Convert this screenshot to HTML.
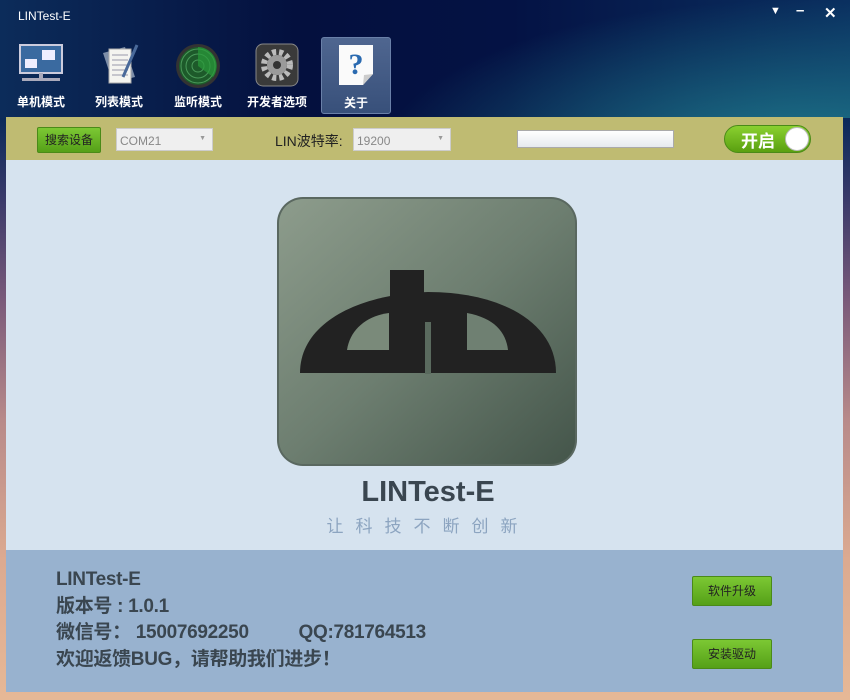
<!DOCTYPE html>
<html><head><meta charset="utf-8"><style>
*{margin:0;padding:0;box-sizing:border-box}
body{width:850px;height:700px;overflow:hidden;position:relative;font-family:"Liberation Sans","Noto Sans CJK SC",sans-serif;
background:linear-gradient(180deg,#0a2452 0px,#0b2a5a 120px,#3a3a6a 200px,#7a5a7a 300px,#b88a8a 420px,#dcaa90 560px,#e6b896 700px);}
.hdr{position:absolute;left:0;top:0;width:850px;height:118px;
background:radial-gradient(ellipse 420px 160px at 800px 160px,#1f7a8c 0%,rgba(31,122,140,0.5) 50%,rgba(31,122,140,0) 100%),linear-gradient(90deg,#0c2c5a 0%,#04103e 35%,#041244 60%,#0a3060 100%);}
.title{position:absolute;left:18px;top:9px;color:#fff;font-size:12px}
.wc{position:absolute;top:4px;color:#fff;font-size:15px;font-weight:bold}
.tab{position:absolute;top:37px;width:70px;height:77px;text-align:center;color:#fff;font-size:12px;font-weight:bold}
.tab span{position:absolute;left:0;right:0;top:56px}
.tab svg{position:absolute;left:50%;top:6px;transform:translateX(-50%)}
.sel{background:linear-gradient(180deg,#4f6690,#38507a);border:1px solid #6a80a8;border-radius:3px}
.bar{position:absolute;left:6px;top:117px;width:837px;height:43px;background:#bfbb72}
.gbtn{position:absolute;background:linear-gradient(180deg,#7cc834,#55a018);border:1px solid #4a8a18;border-radius:2px;font-size:12px;color:#222;text-align:center}
.combo{position:absolute;background:#efefef;border:1px solid #ccc;font-size:12px;color:#888;padding:5px 3px}
.combo i{position:absolute;right:6px;top:6px;font-style:normal;font-size:7px;color:#999}
.main{position:absolute;left:6px;top:160px;width:837px;height:390px;background:#d6e3ef}
.bot{position:absolute;left:6px;top:550px;width:837px;height:142px;background:#98b2cf}
.info{position:absolute;left:50px;top:17px;font-size:19px;font-weight:bold;color:#3a4650;line-height:26.5px;letter-spacing:-0.3px}
</style></head><body>
<div class="hdr"></div>
<div class="title">LINTest-E</div>
<div class="wc" style="left:770px;font-size:11px;top:5px">&#9660;</div>
<div class="wc" style="left:796px;top:2px">&#8211;</div>
<div class="wc" style="left:824px">&#10005;</div>

<div class="tab" style="left:6px"><svg width="46" height="40" viewBox="0 0 46 40"><rect x="2" y="2" width="42" height="28" fill="#3a6aa0" stroke="#ccd" stroke-width="2"/><rect x="7" y="16" width="12" height="9" fill="#eef"/><rect x="24" y="7" width="13" height="10" fill="#eef"/><rect x="21" y="30" width="4" height="5" fill="#aab"/><rect x="4" y="35" width="38" height="3" fill="#aab"/></svg><span>单机模式</span></div>
<div class="tab" style="left:84px"><svg width="44" height="42" viewBox="0 0 44 42"><polygon points="6,10 28,4 38,34 16,40" fill="#7d8ea8"/><polygon points="12,6 34,6 34,40 12,40" fill="#f4f4f0" stroke="#aaa"/><g stroke="#99a" stroke-width="1"><line x1="15" y1="12" x2="31" y2="12"/><line x1="15" y1="17" x2="31" y2="17"/><line x1="15" y1="22" x2="31" y2="22"/><line x1="15" y1="27" x2="31" y2="27"/><line x1="15" y1="32" x2="31" y2="32"/></g><line x1="40" y1="2" x2="26" y2="34" stroke="#4a6a9a" stroke-width="3"/></svg><span>列表模式</span></div>
<div class="tab" style="left:163px"><svg width="46" height="46" viewBox="0 0 46 46"><circle cx="23" cy="23" r="22" fill="#333"/><circle cx="23" cy="23" r="19" fill="#1d5a2a"/><g fill="none" stroke="#4a9a5a" stroke-width="1"><circle cx="23" cy="23" r="6"/><circle cx="23" cy="23" r="12"/><circle cx="23" cy="23" r="17"/></g><path d="M23 23 L23 4 A19 19 0 0 1 38 34 Z" fill="#2a9a3a" opacity=".7"/></svg><span>监听模式</span></div>
<div class="tab" style="left:242px"><svg width="44" height="44" viewBox="0 0 44 44"><rect x="1" y="1" width="42" height="42" rx="7" fill="#3a3a3a" stroke="#888"/><circle cx="22" cy="22" r="13" fill="none" stroke="#bbb" stroke-width="6" stroke-dasharray="4 3"/><circle cx="22" cy="22" r="10" fill="#9a9a9a"/><circle cx="22" cy="22" r="4" fill="#333"/></svg><span>开发者选项</span></div>
<div class="tab sel" style="left:321px"><svg width="40" height="42" viewBox="0 0 40 42"><path d="M3 1 H37 V30 L27 41 H3 Z" fill="#fafafa"/><path d="M27 41 L28 31 L37 30 Z" fill="#ccc"/><text x="20" y="30" text-anchor="middle" font-family="Liberation Serif,serif" font-size="30" fill="#2a6ab0">?</text></svg><span>关于</span></div>

<div class="bar"></div>
<div class="gbtn" style="left:37px;top:127px;width:64px;height:26px;line-height:24px">搜索设备</div>
<div class="combo" style="left:116px;top:128px;width:97px;height:23px">COM21<i>&#9660;</i></div>
<div style="position:absolute;left:275px;top:131px;font-size:14px;color:#222">LIN波特率:</div>
<div class="combo" style="left:353px;top:128px;width:98px;height:23px">19200<i>&#9660;</i></div>
<div style="position:absolute;left:517px;top:130px;width:157px;height:18px;background:linear-gradient(180deg,#fff,#e6eaee);border:1px solid #aaa"></div>
<div style="position:absolute;left:724px;top:125px;width:87px;height:28px;border-radius:14px;background:linear-gradient(180deg,#8ad030,#5aa010);border:1px solid #4a8a18"><span style="position:absolute;left:16px;top:1px;color:#fff;font-size:17px;font-weight:bold">开启</span><div style="position:absolute;right:1px;top:1px;width:24px;height:24px;border-radius:50%;background:#fff;border:1px solid #bbb"></div></div>

<div class="main"></div>
<svg style="position:absolute;left:0;top:0" width="850" height="700" viewBox="0 0 850 700">
<defs><linearGradient id="g" x1="0" y1="0" x2="1" y2="1"><stop offset="0" stop-color="#8d9c8c"/><stop offset="0.5" stop-color="#6d7e70"/><stop offset="1" stop-color="#44554a"/></linearGradient></defs>
<rect x="277" y="197" width="300" height="269" rx="26" fill="#5a6860"/>
<rect x="279" y="199" width="296" height="265" rx="24" fill="url(#g)"/>
<path d="M300 373 C300 322,360 294,428 292 C500 292,556 322,556 373 Z" fill="#222"/>
<rect x="390" y="270" width="34" height="103" fill="#222"/>
<path d="M347 350 L389 350 L389 313 C366 316,350 330,347 350 Z" fill="#7a8a7a"/>
<path d="M467 313 L467 350 L508 350 C506 332,494 318,467 313 Z" fill="#6f8072"/>
<rect x="425" y="322" width="6" height="52" fill="#5a6a5e"/>
</svg>
<div style="position:absolute;left:0;width:856px;top:476px;text-align:center;font-size:29px;font-weight:bold;color:#3a4650">LINTest-E</div>
<div style="position:absolute;left:0;width:856px;top:512px;text-align:center;font-size:17px;color:#8ca4c0;letter-spacing:12px">让科技不断创新</div>

<div class="bot"><div class="info">LINTest-E<br>版本号 : 1.0.1<br>微信号： 15007692250&nbsp;&nbsp;&nbsp;&nbsp;&nbsp;&nbsp;&nbsp;&nbsp;&nbsp; QQ:781764513<br>欢迎返馈BUG，请帮助我们进步！</div></div>
<div class="gbtn" style="left:692px;top:576px;width:80px;height:30px;line-height:28px">软件升级</div>
<div class="gbtn" style="left:692px;top:639px;width:80px;height:30px;line-height:28px">安装驱动</div>
</body></html>
